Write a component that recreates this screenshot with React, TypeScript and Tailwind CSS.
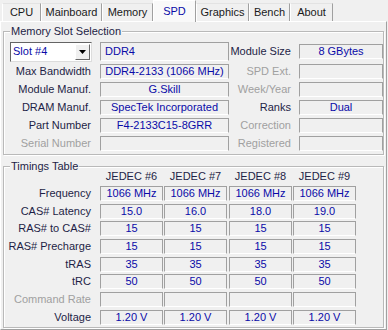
import React from "react";

const fieldBase =
  "h-[15px] border-t border-l border-r border-b border-t-[#a0a0a0] border-l-[#a0a0a0] border-r-[#a0a0a0] border-b-white flex items-center justify-center text-[#0a0aa8] leading-none whitespace-nowrap";

function Tab({ label, w, selected }: { label: string; w: string; selected?: boolean }) {
  return (
    <div
      className={
        selected
          ? `${w} h-[22px] -mb-[1px] bg-[#f9f9f9] border-l border-t border-r border-l-white border-t-white border-r-[#a0a0a0] flex items-center justify-center text-[#0a0aa8] pb-[1px]`
          : `${w} h-[18px] bg-[#f0f0f0] border-l border-t border-r border-l-white border-t-[#e3e3e3] border-r-[#a0a0a0] flex items-center justify-center text-[#1a1a1a]`
      }
    >
      {label}
    </div>
  );
}

function Group({ title, className, children }: { title: string; className: string; children: React.ReactNode }) {
  return (
    <div className={`relative border border-[#b9b9b9] shadow-[inset_1px_1px_0_#ffffff,1px_1px_0_#ffffff] ${className}`}>
      <div className="absolute -top-[7px] left-[6px] px-[1px] bg-[#f0f0f0] leading-[13px] text-[#1e1e46]">
        {title}
      </div>
      {children}
    </div>
  );
}

function InfoRow({
  l1,
  v1,
  l2,
  v2,
  d1,
  d2,
}: {
  l1: string;
  v1: string;
  l2: string;
  v2: string;
  d1?: boolean;
  d2?: boolean;
}) {
  return (
    <div className="h-[15px] flex items-center">
      <div className={`w-[87px] text-right leading-none whitespace-nowrap ${d1 ? "text-[#a0a0a0]" : "text-[#1e1e46]"}`}>{l1}</div>
      <div className={`ml-[9px] w-[129px] ${fieldBase}`}>{v1}</div>
      <div className={`w-[62px] text-right leading-none whitespace-nowrap ${d2 ? "text-[#a0a0a0]" : "text-[#1e1e46]"}`}>{l2}</div>
      <div className={`ml-[8px] w-[84px] ${fieldBase}`}>{v2}</div>
    </div>
  );
}

function TimingRow({ label, values, mt, disabled }: { label: string; values: string[]; mt: string; disabled?: boolean }) {
  return (
    <div className={`h-[15px] flex items-center ${mt}`}>
      <div className={`w-[87px] text-right leading-none whitespace-nowrap ${disabled ? "text-[#a0a0a0]" : "text-[#1e1e46]"}`}>{label}</div>
      <div className={`ml-[9px] w-[63px] ${fieldBase}`}>{values[0]}</div>
      <div className={`ml-[1px] w-[63px] ${fieldBase}`}>{values[1]}</div>
      <div className={`ml-[2px] w-[63px] ${fieldBase}`}>{values[2]}</div>
      <div className={`ml-[1px] w-[63px] ${fieldBase}`}>{values[3]}</div>
    </div>
  );
}

export default function App() {
  return (
    <div className="w-[388px] h-[330px] bg-[#f0f0f0] overflow-hidden text-[11px] font-['Liberation_Sans',Arial,sans-serif]">
      <div className="flex items-end h-[21px] pl-[2px] relative z-10">
        <Tab label="CPU" w="w-[39px]" />
        <Tab label="Mainboard" w="w-[61px]" />
        <Tab label="Memory" w="w-[51px]" />
        <Tab label="SPD" w="w-[43px]" selected />
        <Tab label="Graphics" w="w-[53px]" />
        <Tab label="Bench" w="w-[41px]" />
        <Tab label="About" w="w-[43px]" />
      </div>
      <div className="w-[387px] h-[309px] border border-t-white border-l-white border-r-[#a0a0a0] border-b-[#a0a0a0] flex flex-col">
        <Group title="Memory Slot Selection" className="ml-[2px] mt-[9px] w-[381px] h-[124px]">
          <div className="pt-[10px] flex flex-col gap-[3px]">
            <div className="h-[19px] flex items-center">
              <div className="ml-[6px] w-[82px] h-[20px] bg-white border border-t-[#646464] border-l-[#646464] border-r-[#dcdcdc] border-b-[#dcdcdc] flex items-center">
                <div className="flex-1 pl-[2px] text-[#0a0aa8] leading-none">Slot #4</div>
                <div className="w-[15px] h-[16px] mr-[1px] bg-[#f0f0f0] border border-t-white border-l-white border-r-[#696969] border-b-[#696969] flex items-center justify-center">
                  <svg width="7" height="4" viewBox="0 0 7 4">
                    <polygon points="0,0 7,0 3.5,4" fill="#000" />
                  </svg>
                </div>
              </div>
              <div className={`ml-[8px] w-[129px] !h-[19px] !justify-start pl-[4px] ${fieldBase}`}>DDR4</div>
              <div className="w-[62px] text-right leading-none text-[#1e1e46]">Module Size</div>
              <div className={`ml-[8px] w-[84px] ${fieldBase}`}>8 GBytes</div>
            </div>
            <InfoRow l1="Max Bandwidth" v1="DDR4-2133 (1066 MHz)" l2="SPD Ext." v2="" d2 />
            <InfoRow l1="Module Manuf." v1="G.Skill" l2="Week/Year" v2="" d2 />
            <InfoRow l1="DRAM Manuf." v1="SpecTek Incorporated" l2="Ranks" v2="Dual" />
            <InfoRow l1="Part Number" v1="F4-2133C15-8GRR" l2="Correction" v2="" d2 />
            <InfoRow l1="Serial Number" v1="" l2="Registered" v2="" d1 d2 />
          </div>
        </Group>
        <Group title="Timings Table" className="ml-[2px] mt-[11px] w-[381px] h-[162px]">
          <div className="flex flex-col">
            <div className="mt-[2px] h-[15px] flex items-center text-[#1e1e46]">
              <div className="w-[96px]" />
              <div className="w-[63px] text-center leading-none">JEDEC #6</div>
              <div className="ml-[1px] w-[63px] text-center leading-none">JEDEC #7</div>
              <div className="ml-[2px] w-[63px] text-center leading-none">JEDEC #8</div>
              <div className="ml-[1px] w-[63px] text-center leading-none">JEDEC #9</div>
            </div>
            <TimingRow label="Frequency" values={["1066 MHz", "1066 MHz", "1066 MHz", "1066 MHz"]} mt="mt-[2px]" />
            <TimingRow label="CAS# Latency" values={["15.0", "16.0", "18.0", "19.0"]} mt="mt-[3px]" />
            <TimingRow label="RAS# to CAS#" values={["15", "15", "15", "15"]} mt="mt-[2px]" />
            <TimingRow label="RAS# Precharge" values={["15", "15", "15", "15"]} mt="mt-[3px]" />
            <TimingRow label="tRAS" values={["35", "35", "35", "35"]} mt="mt-[3px]" />
            <TimingRow label="tRC" values={["50", "50", "50", "50"]} mt="mt-[2px]" />
            <TimingRow label="Command Rate" values={["", "", "", ""]} mt="mt-[3px]" disabled />
            <TimingRow label="Voltage" values={["1.20 V", "1.20 V", "1.20 V", "1.20 V"]} mt="mt-[3px]" />
          </div>
        </Group>
      </div>
    </div>
  );
}
